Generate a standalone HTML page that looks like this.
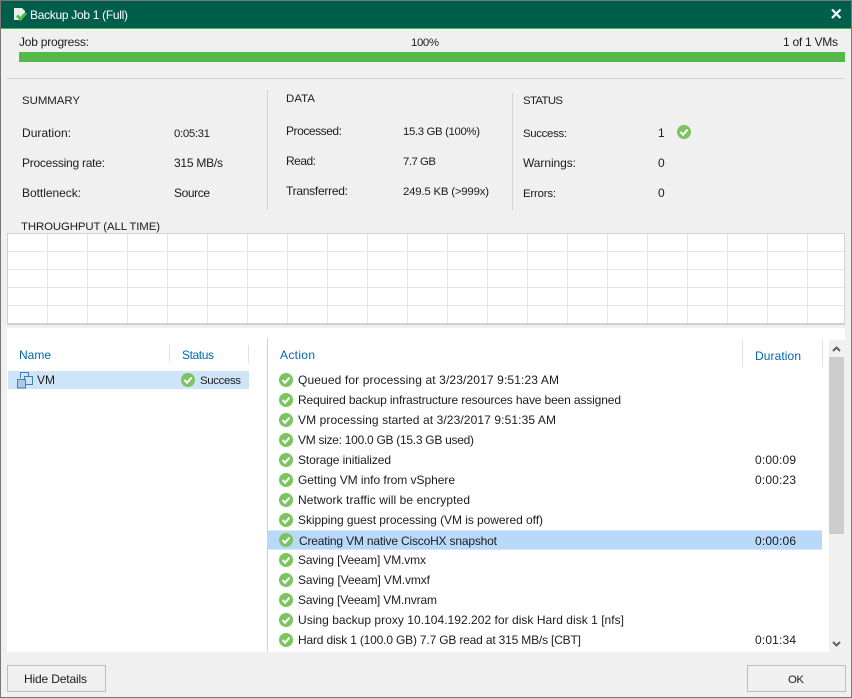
<!DOCTYPE html>
<html><head><meta charset="utf-8"><style>
html,body{margin:0;padding:0;background:#f0f0f0;width:852px;height:698px;overflow:hidden}
svg{display:block}
text{font-family:"Liberation Sans",sans-serif;font-size:12px;fill:#1c1c1c}
.s{font-size:11.4px}
.h{fill:#0067b0}
.t{fill:#fff}
</style></head><body>
<svg width="852" height="698" viewBox="0 0 852 698" xmlns="http://www.w3.org/2000/svg">
<defs>
<g id="ok"><circle cx="0" cy="0" r="7" fill="#7cc45e"/><path d="M-3.5 0 L-1 2.8 L3.6 -2.4" fill="none" stroke="#fff" stroke-width="2"/></g>
</defs>
<rect width="852" height="698" fill="#f0f0f0"/>
<rect x="0.5" y="0.5" width="851" height="697" fill="none" stroke="#777"/>
<rect x="1" y="1" width="850" height="27" fill="#005f4b"/>
<rect x="1" y="28" width="850" height="1" fill="#54b948"/>
<path d="M14 8h8l3 3v5h-3v4h-8z" fill="#e8eeeb"/>
<path d="M17 15.5 L20.5 19 L26 13" fill="none" stroke="#55b848" stroke-width="3"/>
<text class="t" x="30" y="19" textLength="98">Backup Job 1 (Full)</text>
<path d="M832 9.5 L840.5 18 M840.5 9.5 L832 18" stroke="#fff" stroke-width="2.2" fill="none"/>

<text x="19" y="46" textLength="70">Job progress:</text>
<text class="s" x="411" y="46" textLength="28">100%</text>
<text x="783" y="46" textLength="55">1 of 1 VMs</text>
<rect x="19" y="52" width="826" height="10" fill="#54b948"/>
<rect x="7" y="78" width="838" height="1" fill="#d2d2d2"/>

<text class="s" x="22" y="104" textLength="58">SUMMARY</text>
<text x="22" y="137" textLength="49">Duration:</text>
<text x="22" y="167" textLength="83">Processing rate:</text>
<text x="22" y="197" textLength="59">Bottleneck:</text>
<text class="s" x="174" y="137" textLength="36">0:05:31</text>
<text x="174" y="167" textLength="49">315 MB/s</text>
<text x="174" y="197" textLength="36">Source</text>
<rect x="267" y="90" width="1" height="120" fill="#d2d2d2"/>
<text class="s" x="286" y="102" textLength="29">DATA</text>
<text x="286" y="135" textLength="56">Processed:</text>
<text x="286" y="165" textLength="30">Read:</text>
<text x="286" y="195" textLength="62">Transferred:</text>
<text class="s" x="403" y="135" textLength="77">15.3 GB (100%)</text>
<text class="s" x="403" y="165" textLength="33">7.7 GB</text>
<text class="s" x="403" y="195" textLength="86">249.5 KB (&gt;999x)</text>
<rect x="512" y="93" width="1" height="117" fill="#d2d2d2"/>
<text class="s" x="523" y="104" textLength="40">STATUS</text>
<text class="s" x="523" y="137" textLength="44">Success:</text>
<text x="523" y="167" textLength="53">Warnings:</text>
<text class="s" x="523" y="197" textLength="33">Errors:</text>
<text x="658" y="137">1</text>
<text x="658" y="167">0</text>
<text x="658" y="197">0</text>
<use href="#ok" x="684" y="132"/>

<text class="s" x="21" y="230" textLength="139">THROUGHPUT (ALL TIME)</text>
<rect x="7" y="233" width="838" height="91" fill="#fff"/>
<path d="M8 251.5H845M8 269.5H845M8 287.5H845M8 305.5H845M47.5 233V323M87.5 233V323M127.5 233V323M167.5 233V323M207.5 233V323M247.5 233V323M287.5 233V323M327.5 233V323M367.5 233V323M407.5 233V323M447.5 233V323M487.5 233V323M527.5 233V323M567.5 233V323M607.5 233V323M647.5 233V323M687.5 233V323M727.5 233V323M767.5 233V323M807.5 233V323" stroke="#e4e4e4" fill="none"/>
<path d="M7.5 324V233.5H844.5V324" stroke="#d0d0d0" fill="none"/>
<rect x="7" y="323" width="838" height="2" fill="#cfcfcf"/>

<rect x="7" y="328" width="838" height="324" fill="#fff"/>
<text class="h" x="19" y="359" textLength="32">Name</text>
<text class="h" x="182" y="359" textLength="32">Status</text>
<text class="h" x="280" y="359" textLength="35">Action</text>
<text class="h" x="755" y="360" textLength="46">Duration</text>
<path d="M169.5 345V363M248.5 345V363M742.5 340V367M822.5 340V367" stroke="#e2e2e2" fill="none"/>
<rect x="267" y="338" width="1" height="314" fill="#d2d2d2"/>

<rect x="8" y="371" width="241" height="18" fill="#cde4f9"/>
<path d="M20.5 378V372.5H28.5V376" fill="none" stroke="#3f7fb5"/>
<rect x="24.5" y="376.5" width="8" height="8" fill="none" stroke="#3f7fb5"/>
<rect x="17.5" y="379.5" width="8" height="8.5" fill="#a9cbe8" stroke="#3f7fb5"/>
<text x="37" y="384" textLength="18">VM</text>
<use href="#ok" x="188" y="380"/>
<text class="s" x="200" y="384" textLength="41">Success</text>

<rect x="268" y="530" width="554" height="20" fill="#b9d9fb"/>
<rect x="268" y="530" width="554" height="1" fill="#d4e8fc"/>
<rect x="268" y="549" width="554" height="1" fill="#d4e8fc"/>

<use href="#ok" x="286" y="380"/><text x="298" y="384" textLength="261">Queued for processing at 3/23/2017 9:51:23 AM</text>
<use href="#ok" x="286" y="400"/><text x="298" y="404" textLength="323">Required backup infrastructure resources have been assigned</text>
<use href="#ok" x="286" y="420"/><text x="298" y="424" textLength="258">VM processing started at 3/23/2017 9:51:35 AM</text>
<use href="#ok" x="286" y="440"/><text x="298" y="444" textLength="176">VM size: 100.0 GB (15.3 GB used)</text>
<use href="#ok" x="286" y="460"/><text x="298" y="464" textLength="93">Storage initialized</text>
<use href="#ok" x="286" y="480"/><text x="298" y="484" textLength="157">Getting VM info from vSphere</text>
<use href="#ok" x="286" y="500"/><text x="298" y="504" textLength="172">Network traffic will be encrypted</text>
<use href="#ok" x="286" y="520"/><text x="298" y="524" textLength="245">Skipping guest processing (VM is powered off)</text>
<use href="#ok" x="286" y="540"/><text x="299" y="545" textLength="198">Creating VM native CiscoHX snapshot</text>
<use href="#ok" x="286" y="560"/><text x="298" y="564" textLength="128">Saving [Veeam] VM.vmx</text>
<use href="#ok" x="286" y="580"/><text x="298" y="584" textLength="132">Saving [Veeam] VM.vmxf</text>
<use href="#ok" x="286" y="600"/><text x="298" y="604" textLength="139">Saving [Veeam] VM.nvram</text>
<use href="#ok" x="286" y="620"/><text x="298" y="624" textLength="326">Using backup proxy 10.104.192.202 for disk Hard disk 1 [nfs]</text>
<use href="#ok" x="286" y="640"/><text x="298" y="644" textLength="283">Hard disk 1 (100.0 GB) 7.7 GB read at 315 MB/s [CBT]</text>
<text x="755" y="464" textLength="41">0:00:09</text>
<text x="755" y="484" textLength="41">0:00:23</text>
<text x="755" y="545" textLength="41">0:00:06</text>
<text x="755" y="644" textLength="41">0:01:34</text>

<rect x="829" y="340" width="16" height="312" fill="#f0f0f0"/>
<rect x="829" y="357" width="15" height="177" fill="#cdcdcd"/>
<path d="M833 351 L836.5 347.5 L840 351" fill="none" stroke="#606060" stroke-width="2"/>
<path d="M833 642 L836.5 645.5 L840 642" fill="none" stroke="#606060" stroke-width="2"/>

<rect x="7.5" y="665.5" width="98" height="26" fill="#f0f0f0" stroke="#bdbdbd"/>
<text x="24" y="683" textLength="63">Hide Details</text>
<rect x="747.5" y="665.5" width="98" height="26" fill="#f0f0f0" stroke="#bdbdbd"/>
<text class="s" x="788" y="683" textLength="16">OK</text>
</svg>
</body></html>
